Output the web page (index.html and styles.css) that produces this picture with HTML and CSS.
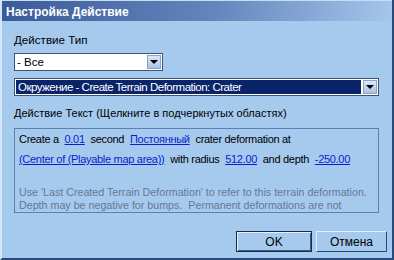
FILE: index.html
```html
<!DOCTYPE html>
<html lang="ru">

<head>
    <meta charset="UTF-8">
    <title>Настройка Действие</title>
    <link rel="stylesheet" href="styles.css">
</head>

<body>

    <div class="window">
        <div class="titlebar">Настройка Действие</div>

        <div class="content">
            <div class="label first">Действие Тип</div>

            <div class="combo short">
                <div class="combo-value">- Все</div>
                <div class="combo-arrow"></div>
            </div>

            <div class="combo wide">
                <div class="combo-value selected">Окружение - Create Terrain Deformation: Crater</div>
                <div class="combo-arrow"></div>
            </div>

            <div class="label second">Действие Текст (Щелкните в подчеркнутых областях)</div>

            <div class="textbox">
                <div class="line">Create a <a href="#">0.01</a> second <a href="#">Постоянный</a> crater deformation at</div>
                <div class="line"><a href="#" class="first-link">(Center of (Playable map area))</a> with radius <a href="#">512.00</a> and depth <a href="#">-250.00</a></div>
                <div class="hint">
                    Use 'Last Created Terrain Deformation' to refer to this terrain deformation.<br>
                    Depth may be negative for bumps.&nbsp; Permanent deformations are not
                </div>
            </div>

            <div class="buttons">
                <button class="default ok">OK</button>
                <button class="cancel">Отмена</button>
            </div>
        </div>
    </div>

</body>

</html>
```

FILE: styles.css
```css
body {
    margin: 0;
    font-family: "Liberation Sans", Arial, sans-serif;
    font-size: 11px;
    color: #000;
}

.window {
    width: 394px;
    height: 260px;
    box-sizing: border-box;
    background-color: #a6c9ee;
    border-left: 2px solid #d4e6fa;
    border-right: 2px solid #2a4a7c;
    border-bottom: 2px solid #2a4a7c;
    overflow: hidden;
}

.titlebar {
    height: 21px;
    box-sizing: border-box;
    margin-left: -2px;
    margin-right: -2px;
    padding: 3px 0 0 6px;
    border-top: 1px solid #c8dcf4;
    background: linear-gradient(to right, #3a5a98, #6486bc 55%, #a6c6ec);
    color: #fff;
    font-weight: bold;
    font-size: 12px;
    line-height: 16px;
}

.content {
    padding: 0 12px 0 12px;
}

.label {
    line-height: 14px;
    font-size: 11px;
}

.label.first {
    margin-top: 12px;
    font-size: 11.6px;
}

.label.second {
    margin-top: 10px;
}

.combo {
    display: flex;
    height: 18px;
    box-sizing: border-box;
    border: 1px solid #3c5478;
    background-color: #fff;
}

.combo.short {
    width: 149px;
    margin-top: 6px;
}

.combo.wide {
    width: 365px;
    margin-top: 7px;
}

.combo-value {
    flex-grow: 1;
    padding-left: 2px;
    line-height: 16px;
    font-size: 11.5px;
}

.combo-value.selected {
    margin: 1px;
    padding-left: 2px;
    line-height: 14px;
    background-color: #0a246a;
    color: #fff;
    letter-spacing: -0.5px;
}

.combo-arrow {
    width: 14px;
    margin: 1px;
    box-sizing: border-box;
    border: 1px solid #8aa4c8;
    background: linear-gradient(#dce8f8, #a8c2e4);
    display: flex;
    justify-content: center;
    align-items: center;
}

.combo-arrow::after {
    content: "";
    border-left: 4px solid transparent;
    border-right: 4px solid transparent;
    border-top: 4px solid #000;
}

.textbox {
    width: 365px;
    height: 85px;
    box-sizing: border-box;
    margin-top: 8px;
    border: 1px solid #5a80b4;
    padding: 0 0 0 4px;
    overflow: hidden;
    font-size: 11px;
}

.line {
    line-height: 20px;
    white-space: nowrap;
    letter-spacing: -0.3px;
}

.line a {
    color: #0a1ed0;
    margin: 0 3px;
}

.line a.first-link {
    margin-left: 0;
}

.hint {
    margin-top: 17px;
    line-height: 13px;
    font-size: 10.7px;
    color: #66788e;
    white-space: nowrap;
}

.buttons {
    display: flex;
    justify-content: flex-end;
    gap: 4px;
    margin-top: 18px;
    margin-right: -7px;
}

button {
    height: 21px;
    box-sizing: border-box;
    font-family: "Liberation Sans", Arial, sans-serif;
    font-size: 12px;
    background-color: #a6c9ee;
    border: 1px solid;
    border-color: #e4f0fc #2a4a7c #2a4a7c #e4f0fc;
    padding: 0;
    color: #000;
}

button.ok {
    width: 76px;
}

button.cancel {
    width: 71px;
}

button.default {
    border: 1px solid #1c2c48;
    box-shadow: inset 1px 1px 0 #e4f0fc, inset -1px -1px 0 #3c5a88;
}
```
